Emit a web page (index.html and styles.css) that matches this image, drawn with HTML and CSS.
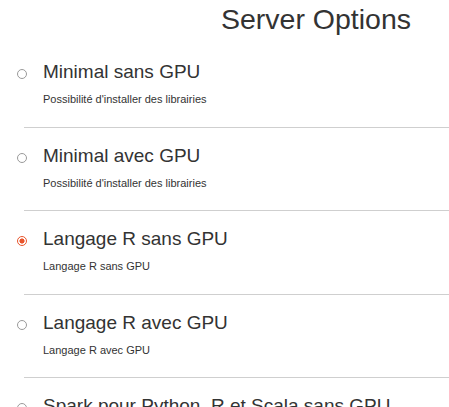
FILE: index.html
```html
<!DOCTYPE html>
<html lang="fr">
<head>
<meta charset="UTF-8">
<meta name="viewport" content="width=device-width, initial-scale=1.0">
<title>Server Options</title>
<link rel="stylesheet" href="styles.css">
</head>
<body>
<div class="container">
  <h1>Server Options</h1>
  <form id="spawn_form">
    <label class="option">
      <input type="radio" name="profile" value="minimal-cpu">
      <div class="option-text">
        <h3>Minimal sans GPU</h3>
        <p>Possibilité d'installer des librairies</p>
      </div>
    </label>
    <hr>
    <label class="option">
      <input type="radio" name="profile" value="minimal-gpu">
      <div class="option-text">
        <h3>Minimal avec GPU</h3>
        <p>Possibilité d'installer des librairies</p>
      </div>
    </label>
    <hr>
    <label class="option">
      <input type="radio" name="profile" value="r-cpu" checked>
      <div class="option-text">
        <h3>Langage R sans GPU</h3>
        <p>Langage R sans GPU</p>
      </div>
    </label>
    <hr>
    <label class="option">
      <input type="radio" name="profile" value="r-gpu">
      <div class="option-text">
        <h3>Langage R avec GPU</h3>
        <p>Langage R avec GPU</p>
      </div>
    </label>
    <hr>
    <label class="option">
      <input type="radio" name="profile" value="spark-cpu">
      <div class="option-text">
        <h3>Spark pour Python, R et Scala sans GPU</h3>
        <p>Spark pour Python, R et Scala sans GPU</p>
      </div>
    </label>
  </form>
</div>
</body>
</html>
```

FILE: styles.css
```css
html, body {
  overflow: hidden;
}

body {
  font-family: "Liberation Sans", Arial, sans-serif;
  color: #333;
  margin: 0;
  padding: 0;
  background: #fff;
}

.container {
  width: 600px;
  margin-left: 16px;
}

h1 {
  font-size: 28.5px;
  font-weight: normal;
  line-height: 32px;
  text-align: center;
  margin: 3px 0 9px;
}

.option {
  display: flex;
  align-items: flex-start;
  gap: 16px;
  padding: 16px 0 20.6px;
  cursor: pointer;
}

.option input {
  appearance: none;
  -webkit-appearance: none;
  width: 10px;
  height: 10px;
  margin: 9px 0 0 1px;
  border: 1px solid #9a9a9a;
  border-radius: 50%;
  background: #fff;
  flex-shrink: 0;
  box-sizing: border-box;
}

.option input:checked {
  border: 1.5px solid #e9552c;
  background: radial-gradient(circle, #e9552c 0 2.3px, #fff 2.8px);
}

.option-text h3 {
  font-size: 19px;
  font-weight: normal;
  line-height: 24px;
  margin: 0 0 8px;
}

.option-text p {
  font-size: 11px;
  line-height: 14px;
  margin: 0;
}

hr {
  border: 0;
  border-top: 1px solid #cfcfcf;
  margin: 0 0 0 8px;
}
```
